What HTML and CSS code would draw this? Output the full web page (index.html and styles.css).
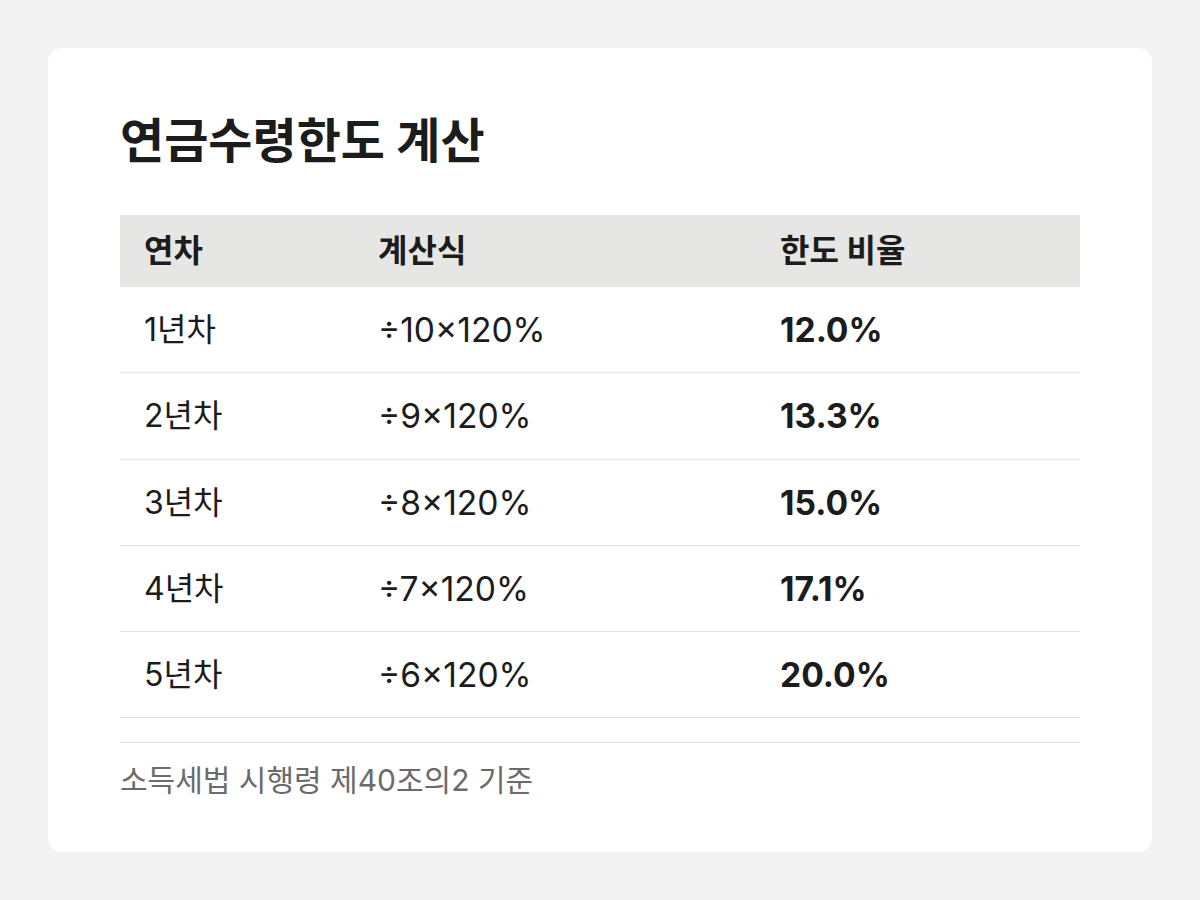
FILE: index.html
```html
<!DOCTYPE html>
<html lang="ko">
<head>
<meta charset="utf-8">
<title>연금수령한도 계산</title>
<link rel="stylesheet" href="styles.css">
</head>
<body>
<main class="card">
  <h1 class="title">연금수령한도 계산</h1>
  <table class="limits">
    <colgroup>
      <col class="c1"><col class="c2"><col class="c3">
    </colgroup>
    <thead>
      <tr><th>연차</th><th>계산식</th><th>한도 비율</th></tr>
    </thead>
    <tbody>
      <tr><td>1년차</td><td class="num">÷10×120%</td><td class="num rate">12.0%</td></tr>
      <tr><td>2년차</td><td class="num">÷9×120%</td><td class="num rate">13.3%</td></tr>
      <tr><td>3년차</td><td class="num">÷8×120%</td><td class="num rate">15.0%</td></tr>
      <tr><td>4년차</td><td class="num">÷7×120%</td><td class="num rate">17.1%</td></tr>
      <tr><td>5년차</td><td class="num">÷6×120%</td><td class="num rate">20.0%</td></tr>
    </tbody>
  </table>
  <p class="note">소득세법 시행령 제40조의2 기준</p>
</main>
</body>
</html>
```

FILE: styles.css
```css
html, body {
  margin: 0;
  padding: 0;
}
body {
  background: #f2f2f2;
  font-family: Inter, "Noto Sans CJK KR", sans-serif;
  color: #1c1c1c;
  padding: 48px;
}
.card {
  background: #ffffff;
  border-radius: 14px;
  padding: 65px 72px 54px;
  height: 804px;
  box-sizing: border-box;
}
.title {
  margin: 0 0 46px;
  font-size: 48px;
  line-height: 56px;
  font-weight: 700;
}
.limits {
  width: 100%;
  border-collapse: collapse;
  table-layout: fixed;
  font-size: 32px;
}
.c1 { width: 234px; }
.c2 { width: 402px; }
.c3 { width: 324px; }
.limits th {
  background: #e6e6e4;
  text-align: left;
  font-weight: 700;
  padding: 15px 24px;
  line-height: 42px;
}
.limits td {
  padding: 22px 24px 21.25px;
  line-height: 42px;
  border-bottom: 1px solid #e2e2e2;
}
.limits .num {
  font-size: 33.6px;
}
.limits .rate {
  font-weight: 700;
}
.note {
  margin: 24px 0 0;
  padding-top: 16px;
  border-top: 1px solid #e2e2e2;
  font-size: 30px;
  line-height: 42px;
  color: #6b6b6b;
}
```
